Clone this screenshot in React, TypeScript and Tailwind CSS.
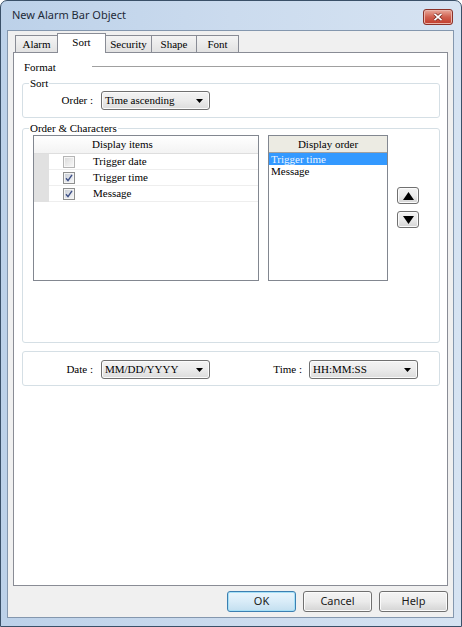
import type { ReactNode } from 'react';

const serif = "font-['Liberation_Serif','Times_New_Roman',serif] text-[11px] text-black";
const ui = "font-['Noto_Sans','Segoe_UI',sans-serif]";

const tabs = [
  { label: 'Alarm', width: 'w-[43px]' },
  { label: 'Sort', width: 'w-[49px]', active: true },
  { label: 'Security', width: 'w-[47px]' },
  { label: 'Shape', width: 'w-[46px]' },
  { label: 'Font', width: 'w-[43px]' },
];

const items = [
  { label: 'Trigger date', checked: false },
  { label: 'Trigger time', checked: true },
  { label: 'Message', checked: true },
];

function Arrow() {
  return (
    <svg width="7" height="4" viewBox="0 0 7 4">
      <path d="M0 0h7L3.5 4z" fill="#000" />
    </svg>
  );
}

function Combo({ value, className }: { value: string; className?: string }) {
  return (
    <div
      className={`flex h-[19px] w-[109px] items-center justify-between rounded-[3px] border border-[#707070] bg-linear-to-b from-[#f3f3f3] via-[#ebebeb] to-[#dcdcdc] pl-[3px] pr-[6px] shadow-[inset_0_0_0_1px_#fbfbfb] ${className ?? ''}`}
    >
      <span className="leading-[17px]">{value}</span>
      <Arrow />
    </div>
  );
}

function Group({ label, className, children }: { label?: string; className?: string; children: ReactNode }) {
  return (
    <fieldset className={`rounded-[3px] border border-[#d5dfe5] ${className ?? ''}`}>
      {label && <legend className="ml-[6px] px-[1px] leading-[14px]">{label}</legend>}
      {children}
    </fieldset>
  );
}

function CheckBox({ checked }: { checked: boolean }) {
  return (
    <div
      className={`flex h-[12px] w-[12px] items-center justify-center border ${
        checked ? 'border-[#8e8f8f] bg-[#f4f4f4]' : 'border-[#b5b5b5] bg-[#f7f7f7]'
      }`}
    >
      <div
        className={`flex h-[8px] w-[8px] items-center justify-center bg-linear-to-br ${
          checked ? 'from-[#cbd0d8] to-[#f4f5f7]' : 'from-[#dcdcdc] to-[#f6f6f6]'
        }`}
      >
        {checked && (
          <svg width="8" height="8" viewBox="0 0 8 8">
            <path d="M1 4.2 3 6.6 7 0.8" fill="none" stroke="#3d4f86" strokeWidth="1.4" />
          </svg>
        )}
      </div>
    </div>
  );
}

function MoveButton({ down }: { down?: boolean }) {
  return (
    <div className="flex h-[17px] w-[22px] items-center justify-center rounded-[3px] border border-[#707070] bg-linear-to-b from-[#f3f3f3] via-[#ebebeb] to-[#d4d4d4] shadow-[inset_0_0_0_1px_#fbfbfb]">
      <svg width="11" height="8" viewBox="0 0 11 8">
        <path d={down ? 'M0 0h11L5.5 8z' : 'M0 8h11L5.5 0z'} fill="#000" />
      </svg>
    </div>
  );
}

function DialogButton({ label, primary }: { label: string; primary?: boolean }) {
  return (
    <button
      type="button"
      className={`h-[21px] w-[69px] rounded-[3px] border text-[11px] text-[#1b1b1b] ${ui} ${
        primary
          ? 'border-[#3c7fb1] bg-linear-to-b from-[#eaf5fc] via-[#d9ecf8] to-[#c3dff0] shadow-[inset_0_0_0_1px_#a6e0f7]'
          : 'border-[#707070] bg-linear-to-b from-[#f4f4f4] via-[#ebebeb] to-[#d4d4d4] shadow-[inset_0_0_0_1px_#fbfbfb]'
      }`}
    >
      {label}
    </button>
  );
}

export default function App() {
  return (
    <div className="flex h-[627px] w-[462px] flex-col overflow-hidden rounded-t-[7px] border border-[#3a5068] bg-linear-to-r from-[#bcd1e9] via-[#cbdbee] to-[#d6e3f2]">
      {/* title bar */}
      <div className="flex h-[29px] items-center justify-between pl-[11px] pr-[8px]">
        <span className={`${ui} text-[11px] text-[#1e2a38]`}>New Alarm Bar Object</span>
        <div className="mt-[2px] flex h-[16px] w-[30px] items-center justify-center rounded-[3px] border border-[#8b3229] bg-linear-to-b from-[#e8a89b] via-[#d0604f] to-[#c0392a] shadow-[inset_0_0_0_1px_#eab4aa]">
          <svg width="10" height="8" viewBox="0 0 10 8">
            <path d="M1.5 0.8 8.5 7.2M8.5 0.8 1.5 7.2" stroke="#6b1f18" strokeWidth="3" />
            <path d="M1.5 0.8 8.5 7.2M8.5 0.8 1.5 7.2" stroke="#fff" strokeWidth="1.8" />
          </svg>
        </div>
      </div>

      {/* client area */}
      <div className={`mb-[8px] ml-[6px] mr-[7px] flex flex-1 flex-col border border-[#8497ae] bg-[#f0f0f0] px-[5px] ${serif}`}>
        <div className="flex h-[21px] items-end pl-[2px]">
          {tabs.map((tab, i) =>
            tab.active ? (
              <div
                key={tab.label}
                className={`relative z-10 -mb-px flex h-[20px] ${tab.width} ${i > 0 ? '-ml-px' : ''} justify-center border border-b-0 border-[#898c95] bg-white`}
              >
                {tab.label}
              </div>
            ) : (
              <div
                key={tab.label}
                className={`flex h-[17px] ${tab.width} ${i > 0 ? '-ml-px' : ''} items-center justify-center border border-b-0 border-[#898c95] bg-linear-to-b from-[#f4f4f4] to-[#e2e2e2]`}
              >
                {tab.label}
              </div>
            ),
          )}
        </div>

        <div className="flex flex-1 flex-col border border-[#898c95] bg-white">
          <div className="mr-[7px] mt-[7px] flex h-[14px] items-center pl-[10px]">
            <span className="w-[68px]">Format</span>
            <div className="flex-1 border-t border-b border-t-[#a0a0a0] border-b-white" />
          </div>

          <div className="ml-[8px] mr-[7px] flex flex-col">
            <Group label="Sort" className="mt-[2px]">
              <div className="flex items-center pb-[7px] pt-[1px]">
                <span className="w-[70px] text-right">Order :</span>
                <Combo value="Time ascending" className="ml-[8px]" />
              </div>
            </Group>

            <Group label="Order & Characters" className="mt-[3px]">
              <div className="flex pb-[61px] pl-[10px]">
                {/* item grid */}
                <div className="h-[146px] w-[226px] border border-[#828790] bg-white">
                  <div className="flex h-[18px] items-center border-b border-[#dedede] bg-linear-to-b from-white to-[#f3f3f3] pl-[58px]">
                    Display items
                  </div>
                  {items.map((item) => (
                    <div key={item.label} className="flex h-[16px]">
                      <div className="w-[15px] bg-[#e1e1e1]" />
                      <div className="flex flex-1 items-center border-b border-[#eeeeee]">
                        <div className="flex w-[40px] justify-center">
                          <CheckBox checked={item.checked} />
                        </div>
                        <span className="pl-[4px]">{item.label}</span>
                      </div>
                    </div>
                  ))}
                </div>

                {/* display order */}
                <div className="ml-[9px] h-[146px] w-[120px] border border-[#828790] bg-white">
                  <div className="flex h-[17px] items-center justify-center border-b border-[#a0a0a0] bg-[#ecebe3]">
                    Display order
                  </div>
                  <div className="h-[12px] bg-[#3399ff] pl-[2px] leading-[12px] text-[#eaf4ff]">Trigger time</div>
                  <div className="h-[12px] pl-[2px] leading-[12px]">Message</div>
                </div>

                <div className="ml-[9px] flex flex-col gap-[7px] pt-[52px]">
                  <MoveButton />
                  <MoveButton down />
                </div>
              </div>
            </Group>

            <Group className="mt-[8px]">
              <div className="flex items-center pb-[6px] pt-[8px]">
                <span className="w-[70px] text-right">Date :</span>
                <Combo value="MM/DD/YYYY" className="ml-[8px]" />
                <span className="w-[92px] text-right">Time :</span>
                <Combo value="HH:MM:SS" className="ml-[7px]" />
              </div>
            </Group>
          </div>
        </div>

        <div className="mb-[5px] mt-[5px] flex h-[21px] justify-end gap-[7px]">
          <DialogButton label="OK" primary />
          <DialogButton label="Cancel" />
          <DialogButton label="Help" />
        </div>
      </div>
    </div>
  );
}
